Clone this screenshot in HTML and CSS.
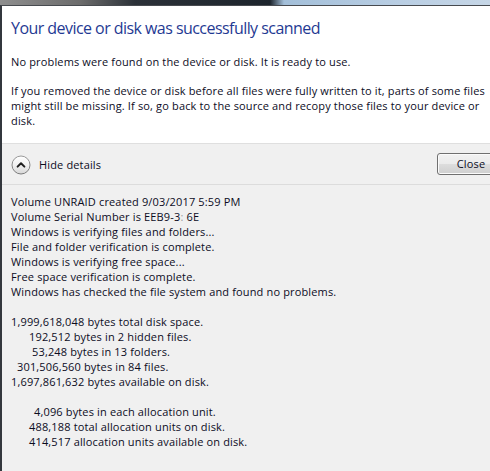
FILE: index.html
```html
<!DOCTYPE html>
<html lang="en">
<head>
<meta charset="utf-8">
<title>Scan result</title>
<link rel="stylesheet" href="styles.css">
</head>
<body>
<div class="backdrop"></div>
<div class="dialog">
  <section class="main">
    <h1 class="title">Your device or disk was successfully scanned</h1>
    <p class="para">No problems were found on the device or disk. It is ready to use.</p>
    <p class="para">If you removed the device or disk before all files were fully written to it, parts of some files might still be missing. If so, go back to the source and recopy those files to your device or disk.</p>
  </section>
  <div class="footer">
    <div class="toggle">
      <svg class="toggle-icon" width="20" height="20" viewBox="0 0 20 20" aria-hidden="true">
        <defs>
          <linearGradient id="ring" x1="0" y1="0" x2="0" y2="1">
            <stop offset="0" stop-color="#9a9a9a"/>
            <stop offset="1" stop-color="#7a7a7a"/>
          </linearGradient>
          <linearGradient id="fill" x1="0" y1="0" x2="0" y2="1">
            <stop offset="0" stop-color="#ffffff"/>
            <stop offset="0.5" stop-color="#f1f1f1"/>
            <stop offset="1" stop-color="#d6d6d6"/>
          </linearGradient>
        </defs>
        <circle cx="10" cy="10" r="9" fill="url(#fill)" stroke="url(#ring)" stroke-width="1"/>
        <path d="M6.6 11.6 L10 8.2 L13.4 11.6" fill="none" stroke="#1e1e1e" stroke-width="2" stroke-linecap="round" stroke-linejoin="round"/>
      </svg>
      <span class="toggle-label">Hide details</span>
    </div>
    <button class="btn" type="button">Close</button>
  </div>
  <section class="details">
    <div class="line">Volume UNRAID created 9/03/2017 5:59 PM</div>
    <div class="line">Volume Serial Number is EEB9-3<span class="smudge">:</span> 6E</div>
    <div class="line">Windows is verifying files and folders...</div>
    <div class="line">File and folder verification is complete.</div>
    <div class="line">Windows is verifying free space...</div>
    <div class="line">Free space verification is complete.</div>
    <div class="line">Windows has checked the file system and found no problems.</div>
    <div class="line blank"></div>
    <div class="line">1,999,618,048 bytes total disk space.</div>
    <div class="line in-b">192,512 bytes in 2 hidden files.</div>
    <div class="line in-c">53,248 bytes in 13 folders.</div>
    <div class="line in-a">301,506,560 bytes in 84 files.</div>
    <div class="line">1,697,861,632 bytes available on disk.</div>
    <div class="line blank"></div>
    <div class="line in-d">4,096 bytes in each allocation unit.</div>
    <div class="line in-b">488,188 total allocation units on disk.</div>
    <div class="line in-b">414,517 allocation units available on disk.</div>
  </section>
</div>
</body>
</html>
```

FILE: styles.css
```css
html, body {
  margin: 0;
  padding: 0;
  overflow: hidden;
  background: #f0f0f0;
}

body {
  width: 490px;
  height: 471px;
  font-family: "Open Sans", "Noto Sans", sans-serif;
  font-size: 11px;
  letter-spacing: 0.15px;
  color: #0c0c1e;
}

.backdrop {
  height: 5px;
  background: linear-gradient(90deg, #8e8e8e 0px, #6c6c6c 80px, #2b3138 135px, #1c242c 270px, #a3bfd9 284px, #b9cee3 400px, #c6d6e6 490px);
}

.dialog {
  width: 490px;
  height: 466px;
  overflow: hidden;
  border-top: 1px solid #474a4f;
  border-left: 2px solid #33373d;
  background: #f0f0f0;
  box-sizing: border-box;
}

.main {
  background: #ffffff;
  padding: 12px 0 15px 9px;
  border-bottom: 1px solid #dfdfdf;
}

.title {
  margin: 0 0 15px 0;
  font-size: 16px;
  font-weight: normal;
  line-height: 21px;
  color: #1f3a93;
  letter-spacing: -0.55px;
}

.para {
  margin: 0 0 14px 0;
  width: 476px;
  line-height: 15px;
}

.para:last-child {
  margin-bottom: 0;
}

.footer {
  display: flex;
  align-items: center;
  gap: 8px;
  height: 40px;
  padding-left: 9px;
  border-bottom: 1px solid #dcdcdc;
}

.toggle {
  display: flex;
  align-items: center;
  gap: 8px;
  flex: 1;
}

.toggle-icon {
  display: block;
  margin-top: 1px;
}

.btn {
  flex: none;
  width: 68px;
  height: 22px;
  padding: 0;
  margin-top: -1px;
  margin-right: -15px;
  font-family: inherit;
  font-size: 11px;
  letter-spacing: 0.15px;
  color: #0c0c1e;
  border: 1px solid #707070;
  border-radius: 3px;
  background: linear-gradient(#f2f2f2 0%, #ebebeb 50%, #dddddd 50%, #cfcfcf 100%);
  box-shadow: inset 0 0 0 1px #fbfbfb;
}

.details {
  padding: 9px 0 0 9px;
}

.line {
  height: 15px;
  line-height: 15px;
  white-space: nowrap;
}

.smudge {
  color: #9a9a9a;
}

.in-a { padding-left: 6px; }
.in-b { padding-left: 18px; }
.in-c { padding-left: 21px; }
.in-d { padding-left: 23px; }
```
